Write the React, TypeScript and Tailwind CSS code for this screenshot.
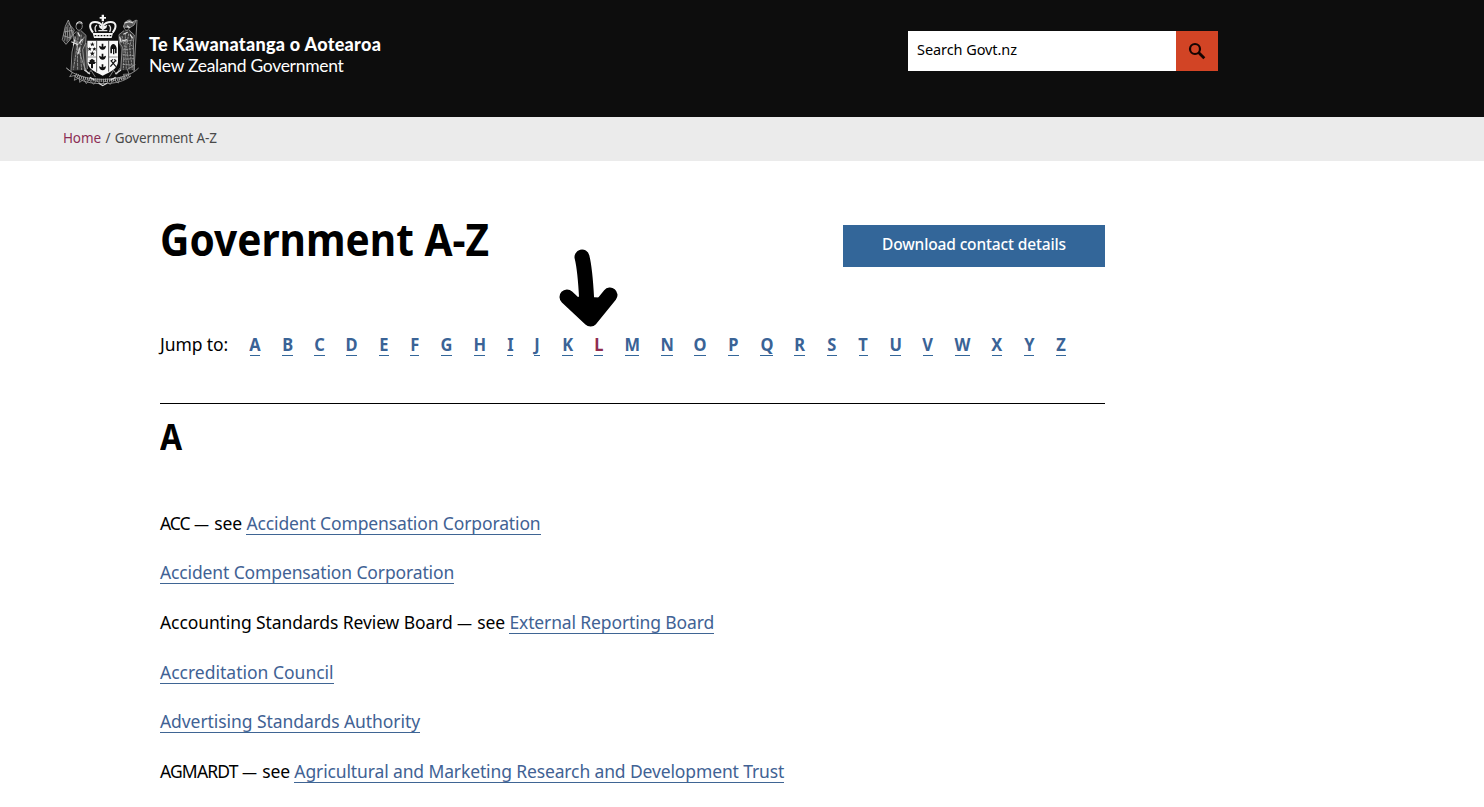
type Entry = { prefix?: string; prefixTracking?: string; link: string; tracking?: string };

// Letter, width of its underline, and the gap before the next letter.
const letters: [string, number, number][] = [
  ["A", 10, 22], ["B", 11, 21], ["C", 11, 21], ["D", 11, 22], ["E", 10, 21],
  ["F", 9, 22], ["G", 11, 22], ["H", 11, 22], ["I", 6, 21], ["J", 6, 22],
  ["K", 11, 21], ["L", 9, 22], ["M", 14, 22], ["N", 12, 21], ["O", 12, 22],
  ["P", 11, 21], ["Q", 13, 21], ["R", 11, 22], ["S", 10, 22], ["T", 9, 22],
  ["U", 11, 22], ["V", 10, 22], ["W", 15, 22], ["X", 10, 22], ["Y", 10, 22], ["Z", 10, 0],
];

const entries: Entry[] = [
  { prefix: "ACC", prefixTracking: "tracking-[-1px]", link: "Accident Compensation Corporation" },
  { link: "Accident Compensation Corporation" },
  { prefix: "Accounting Standards Review Board", prefixTracking: "tracking-[-0.1px]", link: "External Reporting Board" },
  { link: "Accreditation Council", tracking: "tracking-[0px]" },
  { link: "Advertising Standards Authority", tracking: "tracking-[-0.07px]" },
  { prefix: "AGMARDT", prefixTracking: "tracking-[-0.85px]", link: "Agricultural and Marketing Research and Development Trust" },
];

function Crest() {
  return (
    <svg width="90" height="86" viewBox="0 0 270 258" fill="none" className="shrink-0" aria-hidden="true">
      {/* crown */}
      <g fill="#f4f4f4">
        <path d="M140 20h7v7h6v5h-6v8h-7v-8h-6v-5h6z" />
        <path d="M113 75h61l-4 15h-53z" />
        <path d="M143 46l6 8 8-4-3 10-10 6-10-6-3-10 7 4z" />
      </g>
      <path d="M114 74c-14-18-10-32 6-32 10 0 17 4 23 12 7-9 14-12 24-12 16 0 20 14 6 32" stroke="#f4f4f4" strokeWidth="6" />
      <path d="M123 72c-5-12-3-18 3-21M164 72c5-12 3-18-3-21M143 42v28M130 68h27" stroke="#ddd" strokeWidth="4" />
      <path d="M119 83h50" stroke="#111" strokeWidth="4" strokeDasharray="5 4" />
      {/* shield */}
      <path d="M97 98h92v62c0 22-24 33-46 43-22-10-46-21-46-43z" fill="#f9f9f9" />
      <path d="M125 99v92M161 99v92" stroke="#333" strokeWidth="2.5" />
      <path d="M98 147h26M162 147h26" stroke="#555" strokeWidth="2" />
      <g fill="#111">
        <path d="M112 102l2 5h5l-4 3 2 5-5-3-4 3 1-5-4-3h5zM104 117l2 4h4l-3 3 1 4-4-2-4 2 1-4-3-3h5zM118 117l2 4h4l-3 3 1 4-4-2-4 2 1-4-3-3h5zM112 129l2 5h6l-5 4 2 6-5-4-5 4 2-6-5-4h6z" />
        <path d="M132 113l8 3v-9h5v9l8-3c-1 8-4 12-10 12s-10-4-11-12zM132 143l8 3v-9h5v9l8-3c-1 8-4 12-10 12s-10-4-11-12zM132 175l8 3v-9h5v9l8-3c-1 8-4 12-10 12s-10-4-11-12z" />
        <path d="M166 136v-16c1-8 5-12 9-12s8 4 10 12v16h-5v-13h-2v16h-4v-16h-3v13z" />
        <path d="M103 158l8-6 9 6-2 4h5l-4 6h-5v13h-6v-13h-5l-3-6h5z" />
      </g>
      <path d="M167 157l16 19M183 156l-17 20M167 160l7-6M178 154l6 6" stroke="#111" strokeWidth="3.5" />
      {/* left supporter with flag */}
      <path d="M62 72l15-5 15 14-2 24 8 14-3 66-46 3 8-64 4-18z" fill="#383838" />
      <path d="M40 36l-9 19-9 40 11 14 13-15 12-28z" fill="#222" />
      <g stroke="#a8a8a8" strokeWidth="2.4">
        <path d="M40 36l52 152M40 36l-9 19-9 40 11 14 13-15 12-28-18-20M34 56l-5 42M39 50l-3 51M45 57l-3 40M50 66l-4 24M25 83l24 8M27 72l26-5" />
        <path d="M63 55c0-12 17-14 19-2 0 9-5 14-10 14s-9-5-9-12zM64 70l-11 12 5 20-7 30-3 56M78 68l15 14-1 23-9 20 7 61M93 105l4 78" />
        <path d="M61 85l5 32-11 68M70 77l-3 42 1 67M79 80l-4 39 5 67M88 86l-9 25" strokeDasharray="9 2" />
      </g>
      <path d="M64 49c3-9 14-11 18-2M68 73l7 12M59 94l-4 18M75 118l-6 20M49 101l21 9M83 93l-12 14" stroke="#ddd" strokeWidth="3.5" />
      {/* right supporter */}
      <path d="M208 67l15-3 15 18-1 105h-41l2-62-6-18 2-27z" fill="#363636" />
      <g stroke="#a4a4a4" strokeWidth="2.4">
        <path d="M246 36l-9 154M207 55c0-11 15-12 16-1 0 9-4 13-8 13s-8-4-8-12zM207 68l-15 12 1 23 9 14-5 70M222 67l16 14-3 22 3 84" />
        <path d="M201 84l7 29-3 72M211 76v37l3 72M221 77l-6 39 8 68M231 85l-7 32 8 68M196 103l38-7M196 91l38 24M204 126l30-4M203 140l34 3M204 154l33-2M203 169l34 3" strokeDasharray="7 2" />
        <path d="M205 57l5-14 9-6 7-1 6 6 12-6-7 15-12 8z" fill="#555" />
      </g>
      <path d="M209 45l14-4 12 4M216 53l8 6M205 79l13-6M225 79l8 12M200 99l17-4M194 86l4 16" stroke="#ddd" strokeWidth="3.5" />
      {/* ferns and motto scroll */}
      <path d="M34 180c24 22 62 34 109 34s86-12 108-34M58 204c20 16 48 23 85 23s65-7 85-23" stroke="#a5a5a5" strokeWidth="2.5" />
      <path d="M62 200c24 12 46 17 81 17s60-5 83-17" stroke="#aaa" strokeWidth="10" strokeDasharray="3 3" />
      <path d="M34 180l18 14-8 12 17-4-3 15 15-8 1 14 12-9 8 13 8-12 14 14 8-11 17 12 9-12 16 11 10-14 14 10 3-14 16 3-4-15 17-1-5-14 24-14M91 181l9 17 8-11 13 20M194 181l-9 18-9-12-13 20" stroke="#989898" strokeWidth="2.5" />
      <path d="M88 186l17 12M181 198l17-12M105 208l14 9M166 217l16-9M131 226l12 7 13-7" stroke="#ddd" strokeWidth="3.5" />
    </svg>
  );
}

export default function App() {
  return (
    <div className="h-[807px] w-full overflow-hidden bg-white font-['Noto_Sans',sans-serif] text-black">
      <header className="flex h-[117px] items-start bg-[#0d0d0d]">
        <a className="ml-[55px] flex w-[853px] pt-2 text-white">
          <Crest />
          <span className="flex flex-col pt-[26px] pl-1 font-['Lato',sans-serif] whitespace-nowrap">
            <strong className="text-[18px] leading-[21px] font-black tracking-[0.29px]">Te Kāwanatanga o Aotearoa</strong>
            <span className="text-[17.5px] leading-[21px] tracking-[-0.3px]">New Zealand Government</span>
          </span>
        </a>
        <div className="mt-[31px] flex h-10 w-[310px]">
          <div className="flex w-[268px] items-center bg-white pb-[3px] pl-[9px] text-[14.5px] tracking-[-0.07px]">Search Govt.nz</div>
          <button className="flex w-[42px] items-center justify-center bg-[#d24425]" aria-label="Search">
            <svg width="18" height="18" viewBox="0 0 18 18" fill="none" stroke="#150503">
              <circle cx="7" cy="7" r="5" strokeWidth="2.2" />
              <path d="M10.6 10.6L16.3 16.3" strokeWidth="2.8" />
            </svg>
          </button>
        </div>
      </header>

      <nav className="flex h-11 items-center bg-[#ebebeb] pb-px pl-[63px] text-[13.5px] tracking-[-0.13px] text-[#4a4a4a]">
        <a className="text-[#8b2f55]">Home</a>
        <span className="mx-[4.5px]">/</span>
        <span>Government A-Z</span>
      </nav>

      <main className="ml-40 w-[945px]">
        <div className="flex h-[159px] items-start justify-between pt-12">
          <h1 className="origin-left scale-x-[0.923] text-[44px] leading-[60px] font-bold">Government A-Z</h1>
          <a className="mt-4 flex h-[42px] w-[262px] items-center justify-center bg-[#336699] pb-0.5 text-[15.5px] font-medium tracking-[-0.14px] text-white">
            Download contact details
          </a>
        </div>

        <div className="relative flex h-[84px] items-start border-b border-black pt-3 text-[17.5px] leading-6">
          <span className="w-[90px] tracking-[-0.1px]">Jump to:</span>
          {letters.map(([letter, width, gap]) => (
            <a
              key={letter}
              style={{ width, marginRight: gap }}
              className={`flex h-6 justify-center border-b border-[#336699] font-bold ${letter === "L" ? "text-[#8f2c50]" : "text-[#3a6396]"}`}
            >
              <span className="scale-x-[0.94]">{letter}</span>
            </a>
          ))}
          <svg className="absolute top-[-72px] left-[398px]" width="62" height="80" viewBox="0 0 62 80" fill="none" stroke="#000" strokeLinecap="round" strokeLinejoin="round">
            <path d="M24 9C28 25 28 43 29.500 66" strokeWidth="15" />
            <path d="M9 49L32.500 71L52 47" strokeWidth="15" />
            <path d="M22 52L32 66L41 53Z" fill="#000" strokeWidth="7" />
          </svg>
        </div>

        <h2 className="origin-left scale-x-[0.9] pt-2 pb-px text-[35.5px] leading-[48px] font-bold">A</h2>

        <ul className="mt-[49.8px] text-[17.5px] leading-6 tracking-[-0.13px]">
          {entries.map((entry, i) => (
            <li key={i} className="flex h-[49.6px] items-start whitespace-pre">
              {entry.prefix && (
                <span>
                  <span className={entry.prefixTracking}>{entry.prefix}</span>{" "}
                  <span className="text-[15px] tracking-[0.8px]">—</span> see{" "}
                </span>
              )}
              <a className={`h-6 border-b border-[#3f6594] text-[#416294] ${entry.tracking ?? ""}`}>{entry.link}</a>
            </li>
          ))}
        </ul>
      </main>
    </div>
  );
}
